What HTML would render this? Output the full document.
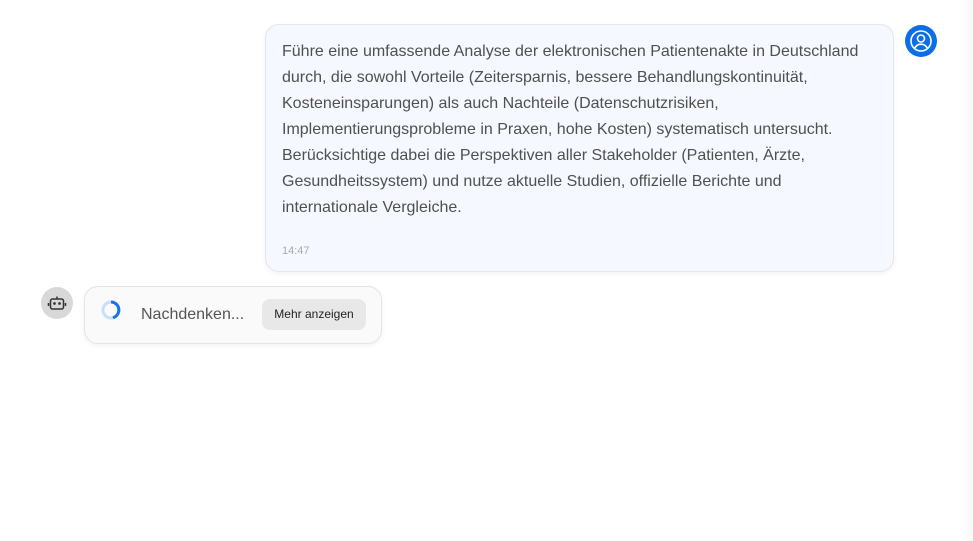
<!DOCTYPE html>
<html><head><meta charset="utf-8"><style>
*{margin:0;padding:0;box-sizing:border-box}
body{width:973px;height:541px;background:#fff;font-family:"Liberation Sans",sans-serif;position:relative;overflow:hidden}
.edge{position:absolute;right:0;top:0;width:14px;height:541px;background:linear-gradient(to right,#fff,#f8f8f8)}
.bubble{position:absolute;left:265px;top:24px;width:629px;height:248px;background:#f5f8ff;border:1px solid #e3e6ec;border-radius:14px;box-shadow:0 2px 6px rgba(0,0,0,.05)}
.txt{position:absolute;left:16px;top:14px;font-size:16px;line-height:26px;color:#505050;white-space:nowrap;letter-spacing:0}
.time{position:absolute;left:16px;top:220px;font-size:11px;color:#aaa}
.av{position:absolute;left:905px;top:25px;width:32px;height:32px;border-radius:50%;background:#0a6ee6}
.bot{position:absolute;left:41px;top:287px;width:32px;height:32px;border-radius:50%;background:#d8d8d8}
.think{position:absolute;left:84px;top:286px;width:298px;height:58px;background:#fafafa;border:1px solid #e4e4e4;border-radius:14px;box-shadow:0 2px 6px rgba(0,0,0,.05)}
.think .t{position:absolute;left:56px;top:19px;font-size:16px;color:#555}
.btn{position:absolute;left:177px;top:12px;width:104px;height:31px;background:#e8e8e8;border-radius:8px;font-size:12px;color:#222;text-align:center;line-height:31px}
</style></head><body>
<div class="edge"></div>
<div class="bubble"><div class="txt">Führe eine umfassende Analyse der elektronischen Patientenakte in Deutschland<br>durch, die sowohl Vorteile (Zeitersparnis, bessere Behandlungskontinuität,<br>Kosteneinsparungen) als auch Nachteile (Datenschutzrisiken,<br>Implementierungsprobleme in Praxen, hohe Kosten) systematisch untersucht.<br>Berücksichtige dabei die Perspektiven aller Stakeholder (Patienten, Ärzte,<br>Gesundheitssystem) und nutze aktuelle Studien, offizielle Berichte und<br>internationale Vergleiche.</div><div class="time">14:47</div></div>
<div class="av"><svg width="32" height="32" viewBox="0 0 32 32" fill="none" stroke="#fff" stroke-width="1.6"><circle cx="16" cy="16" r="10"/><circle cx="16" cy="13.5" r="3.5"/><path d="M9.5 23.5c1.5-3 3.8-4.3 6.5-4.3s5 1.3 6.5 4.3"/></svg></div>
<div class="bot"><svg width="32" height="32" viewBox="0 0 32 32" fill="none" stroke="#333" stroke-width="1.5"><rect x="9.5" y="12" width="13" height="10" rx="2"/><path d="M16 12V9.5M7.5 16v3M24.5 16v3"/><circle cx="13.5" cy="16.5" r=".6" fill="#333"/><circle cx="18.5" cy="16.5" r=".6" fill="#333"/></svg></div>
<div class="think">
<svg style="position:absolute;left:15px;top:12px" width="22" height="22" viewBox="0 0 22 22" fill="none" stroke-width="3"><circle cx="11" cy="11" r="8" stroke="#c9def9"/><path d="M11 3a8 8 0 0 1 2 15.7" stroke="#1a73e8"/></svg>
<div class="t">Nachdenken...</div><div class="btn">Mehr anzeigen</div></div>
</body></html>
